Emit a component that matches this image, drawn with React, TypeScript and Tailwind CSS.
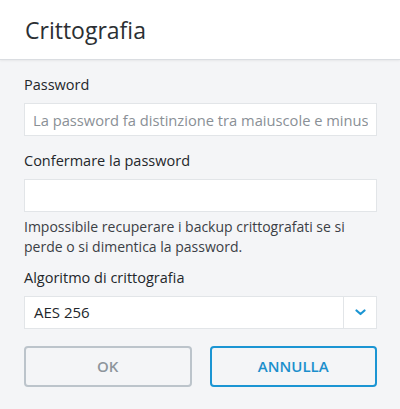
export default function App() {
  return (
    <div className="w-[400px] h-[409px] bg-[#f4f5f7] flex flex-col font-['Open_Sans',sans-serif] overflow-hidden">
      {/* header */}
      <div className="h-[60px] bg-white border-b border-[#dadde1] shadow-[0_1px_2px_rgba(0,0,0,0.06)] flex items-center px-[25px]">
        <h1 className="text-[23px] leading-[30px] text-[#2b2f33]">Crittografia</h1>
      </div>

      <div className="flex flex-col px-[24px] pt-[15px]">
        <label className="text-[14.5px] leading-[20px] text-[#23272b]">Password</label>
        <input
          type="password"
          placeholder="La password fa distinzione tra maiuscole e minuscole"
          className="mt-2 h-[33px] w-[353px] bg-white border border-[#e2e5e8] px-[8px] text-[14.7px] text-[#2b2f33] placeholder:text-[#8a9096] outline-none"
        />

        <label className="mt-[15px] text-[14.5px] leading-[20px] text-[#23272b]">Confermare la password</label>
        <input
          type="password"
          className="mt-2 h-[33px] w-[353px] bg-white border border-[#e2e5e8] px-[8px] text-[14.7px] outline-none"
        />

        <p className="mt-[5px] text-[14px] leading-[20px] text-[#3b4045]">
          Impossibile recuperare i backup crittografati se si perde o si dimentica la password.
        </p>

        <label className="mt-[11px] text-[14.5px] leading-[20px] text-[#23272b]">Algoritmo di crittografia</label>
        <div className="mt-2 h-[33px] w-[353px] bg-white border border-[#e2e5e8] flex">
          <div className="flex-1 flex items-center px-[9px] text-[15px] text-[#23272b]">AES 256</div>
          <div className="w-[33px] border-l border-[#e2e5e8] flex items-center justify-center">
            <svg width="11" height="7" viewBox="0 0 11 7" fill="none">
              <path d="M1.5 1.5L5.5 5L9.5 1.5" stroke="#1b95d3" strokeWidth="2.2" strokeLinecap="round" strokeLinejoin="round" />
            </svg>
          </div>
        </div>

        <div className="mt-[17px] flex gap-[18px] w-[353px]">
          <button className="flex-1 h-[41px] rounded-[4px] border-2 border-[#bcc4cb] text-[15px] font-semibold text-[#8e959c]">
            OK
          </button>
          <button className="flex-1 h-[41px] rounded-[4px] border-2 border-[#1b95d3] text-[15px] font-semibold text-[#1b8fcc]">
            ANNULLA
          </button>
        </div>
      </div>
    </div>
  );
}
